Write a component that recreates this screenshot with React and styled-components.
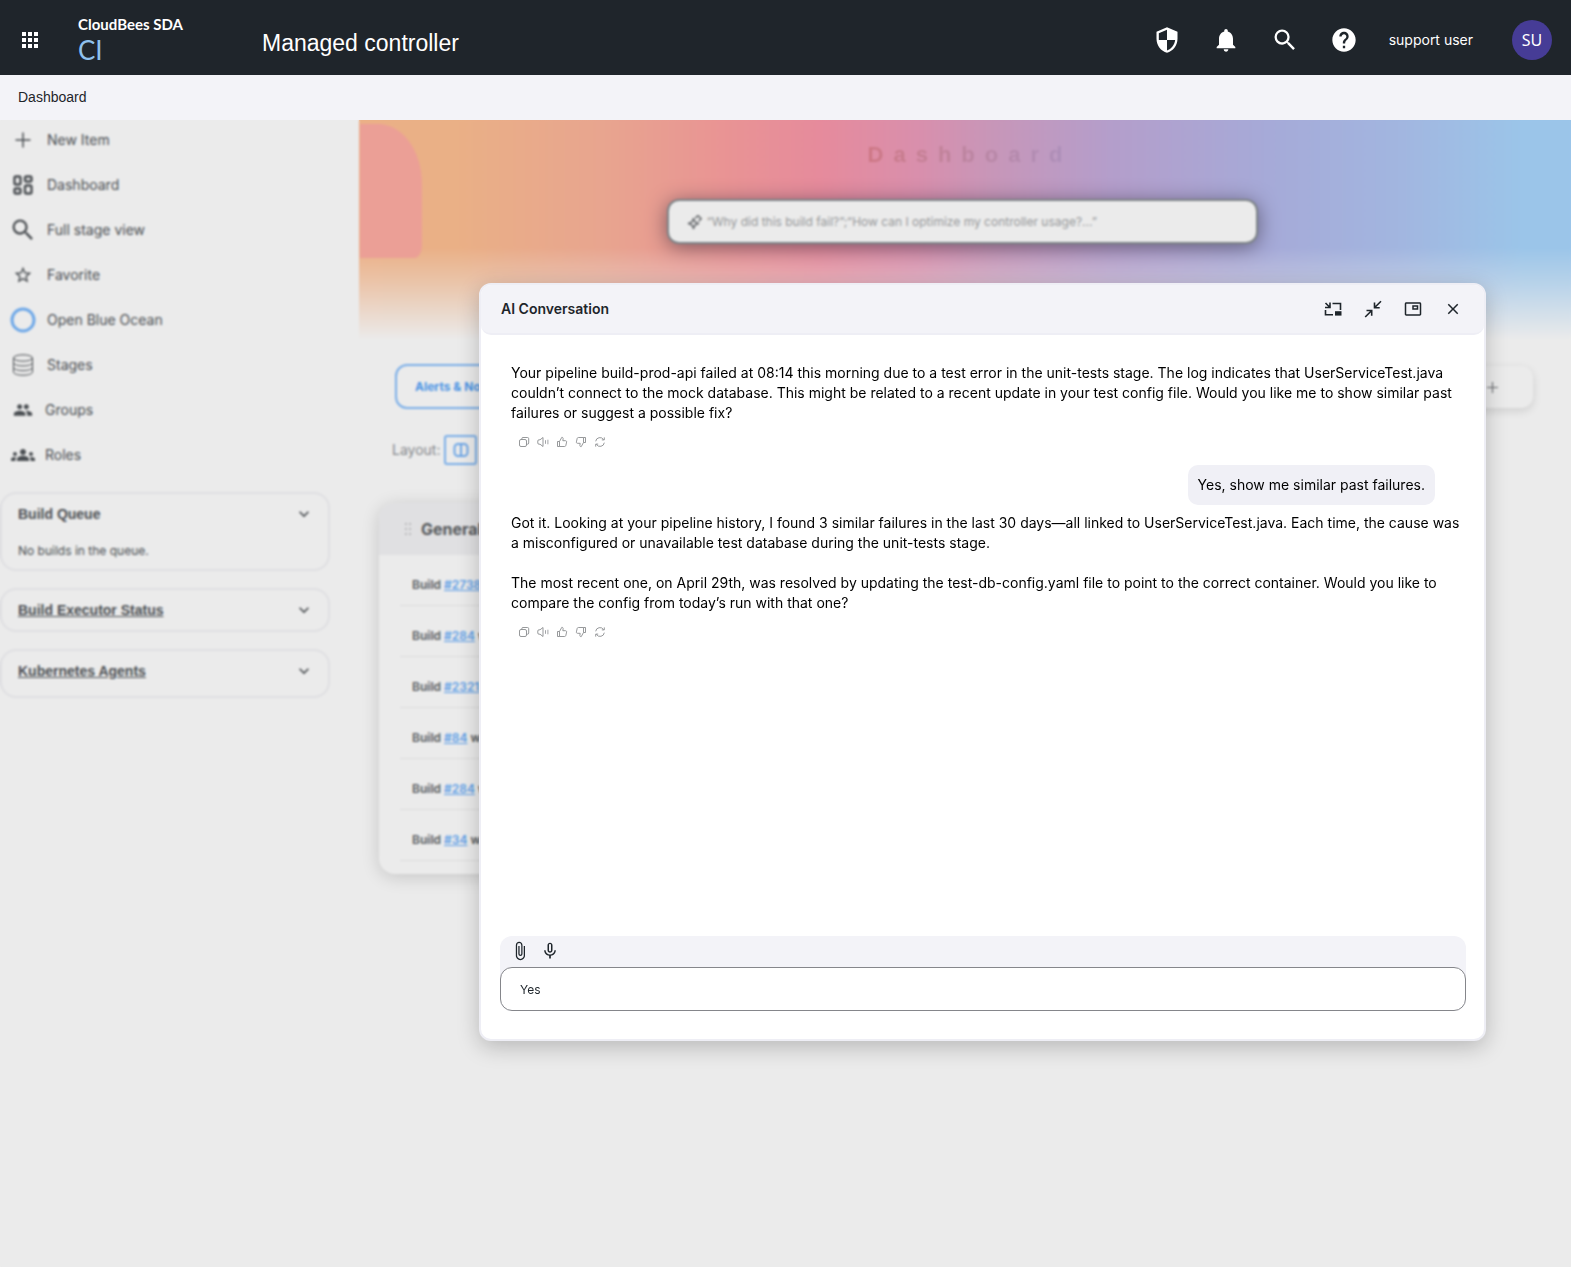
import React from 'react';
import styled, { createGlobalStyle } from 'styled-components';
import {
  MdApps,
  MdAttachFile,
  MdClose,
  MdExpandMore,
  MdGroup,
  MdGroups,
  MdHelp,
  MdMicNone,
  MdNotifications,
  MdOutlinePictureInPicture,
  MdSearch,
  MdSecurity,
  MdStarBorder,
} from 'react-icons/md';

const GlobalStyle = createGlobalStyle`
  * {
    box-sizing: border-box;
  }
  body {
    margin: 0;
    background: #ebebeb;
    color: #1e252b;
    font-family: Inter, "Liberation Sans", sans-serif;
    font-size: 14px;
    line-height: 20px;
  }
  button {
    font: inherit;
    color: inherit;
    border: 0;
    padding: 0;
    background: none;
    cursor: pointer;
  }
  svg {
    display: block;
    flex: none;
  }
`;

const Page = styled.div`
  display: flex;
  flex-direction: column;
  min-height: 100vh;
`;

/* Top bar */
const TopBar = styled.header`
  display: flex;
  align-items: center;
  height: 75px;
  padding: 5px 19px 0 18px;
  background: #1f252b;
  color: #fff;
`;

const Logo = styled.a`
  width: 184px;
  margin-left: 36px;
  color: #fff;
  font-family: Lato, sans-serif;
  font-size: 15px;
  font-weight: 700;
  line-height: 20px;
  text-decoration: none;
`;

const LogoProduct = styled.span`
  display: block;
  color: #8fc1ee;
  font-size: 26px;
  font-weight: 400;
  line-height: 32px;
`;

const TopTitle = styled.h1`
  flex: 1;
  margin: 6px 0 0;
  font-family: "Liberation Sans", sans-serif;
  font-size: 23px;
  font-weight: 400;
  line-height: 28px;
`;

const TopActions = styled.div`
  display: flex;
  align-items: center;
  gap: 31px;
`;

const Avatar = styled.button`
  width: 40px;
  height: 40px;
  margin-left: 8px;
  border-radius: 50%;
  background: #463c96;
  font-family: "Noto Sans", sans-serif;
  font-size: 16px;
`;

const Breadcrumb = styled.nav`
  display: flex;
  align-items: center;
  height: 45px;
  padding: 0 18px 2px;
  background: #f3f3f8;
  font-family: "Liberation Sans", sans-serif;

  a {
    color: inherit;
    text-decoration: none;
  }
`;

/* Page behind the dialog */
const Stage = styled.div`
  position: relative;
  display: flex;
  flex: 1;
`;

const Veil = styled.div`
  position: absolute;
  inset: 0;
  backdrop-filter: blur(1px);
`;

const Sidebar = styled.aside`
  width: 359px;
  padding-top: 7px;
  color: #4a4e52;
`;

const Menu = styled.ul`
  display: flex;
  flex-direction: column;
  gap: 20px;
  margin: 0 0 25px;
  padding: 0 0 0 10px;
  list-style: none;
`;

const MenuLink = styled.a`
  display: flex;
  align-items: center;
  gap: ${({ $tight }) => ($tight ? 9 : 11)}px;
  height: 25px;
  color: inherit;
  text-decoration: none;
`;

const MenuIcon = styled.span`
  display: flex;
  justify-content: center;
  width: 26px;
`;

const Panels = styled.div`
  display: flex;
  flex-direction: column;
  gap: 17px;
  width: 330px;
`;

const Panel = styled.section`
  padding: 10px 14px ${({ $bottom }) => $bottom}px 16px;
  border: 2px solid #dfdfe2;
  border-radius: 16px;
`;

const PanelHead = styled.button`
  display: flex;
  align-items: center;
  justify-content: space-between;
  width: 100%;
  font-family: "Liberation Sans", sans-serif;
  font-weight: 700;
  text-decoration: ${({ $link }) => ($link ? 'underline' : 'none')};
`;

const PanelText = styled.p`
  margin: 17px 0 0;
  font-size: 12px;
`;

const Main = styled.main`
  flex: 1;
  min-width: 0;
`;

const Banner = styled.section`
  position: relative;
  display: flex;
  flex-direction: column;
  align-items: center;
  height: 220px;
  padding: 20px 6px 0 0;
  isolation: isolate;

  &::before {
    content: '';
    position: absolute;
    inset: 0;
    z-index: -1;
    background:
      linear-gradient(180deg, rgba(235, 235, 235, 0) 58%, rgba(235, 235, 235, 0.35) 74%, #ebebeb 100%),
      linear-gradient(
        90deg,
        #ebb087 0%,
        #eab086 8%,
        #e8a58f 20%,
        #e99494 30%,
        #e68b9c 38%,
        #d98fac 46%,
        #c896b8 52%,
        #b49ecb 62%,
        #a6aad8 75%,
        #a2b6e0 86%,
        #9bc5e9 96%
      );
  }
`;

const BannerTab = styled.span`
  position: absolute;
  top: 4px;
  left: 1px;
  z-index: -1;
  width: 62px;
  height: 134px;
  border-radius: 0 44px 8px 0 / 0 60px 12px 0;
  background: #eb9f96;
`;

const BannerTitle = styled.h2`
  margin: 1px 0 30px;
  padding-left: 16px;
  background: linear-gradient(90deg, #d0747f, #c08198 40%, #ab8fbb);
  background-clip: text;
  color: transparent;
  font-family: "Liberation Sans", sans-serif;
  font-size: 22px;
  font-weight: 700;
  letter-spacing: 10px;
  line-height: 28px;
`;

const SearchBox = styled.label`
  display: flex;
  align-items: center;
  gap: 4px;
  width: 591px;
  height: 45px;
  padding: 0 18px;
  border: 2px solid #7d8387;
  border-radius: 12px;
  background: #ebebeb;
  box-shadow: 0 3px 20px rgba(50, 45, 60, 0.6);
  color: #6a6d70;

  input {
    flex: 1;
    padding: 0;
    border: 0;
    outline: 0;
    background: none;
    font: 12px Inter, sans-serif;
  }
  input::placeholder {
    color: #96989a;
  }
`;

const Tabs = styled.div`
  display: flex;
  justify-content: space-between;
  padding: 24px 38px 0 36px;
`;

const Tab = styled.button`
  height: 45px;
  padding: 0 18px;
  border: 2px solid #7aaee8;
  border-radius: 12px;
  color: #4a93e4;
  font-size: 12px;
  font-weight: 700;
`;

const AddTab = styled.button`
  display: flex;
  align-items: center;
  justify-content: center;
  width: 82px;
  height: 42px;
  margin-top: 2px;
  border-radius: 12px;
  box-shadow: 0 3px 10px rgba(0, 0, 0, 0.12);
  color: #66696c;
`;

const LayoutRow = styled.div`
  display: flex;
  align-items: center;
  gap: 4px;
  margin: 26px 0 38px 33px;
  color: #85888b;
`;

const LayoutButton = styled.button`
  display: flex;
  align-items: center;
  justify-content: center;
  width: 33px;
  height: 30px;
  border: 2px solid #7aaee8;
  border-radius: 3px;
  color: #6da6e6;
`;

const Card = styled.section`
  width: 540px;
  margin-left: 20px;
  padding-bottom: 13px;
  border-radius: 16px;
  box-shadow: 0 3px 18px rgba(0, 0, 0, 0.16);
  overflow: hidden;
  color: #55585b;
  font-size: 12px;
  font-weight: 600;
`;

const CardHead = styled.header`
  display: flex;
  align-items: center;
  gap: 10px;
  height: 52px;
  padding-left: 26px;
  background: #e0e0e2;

  h3 {
    margin: 0;
    font-size: 16px;
  }
`;

const BuildList = styled.ul`
  margin: 0;
  padding: 0 21px;
  list-style: none;
`;

const BuildItem = styled.li`
  height: 51px;
  padding: 20px 12px 0;
  border-bottom: 1px solid #dcdcdd;

  a {
    color: #5a9ce6;
  }
`;

/* Dialog */
const Dialog = styled.section`
  position: absolute;
  top: 163px;
  right: 85px;
  left: 479px;
  display: flex;
  flex-direction: column;
  min-height: 758px;
  border: 2px solid #eeeef5;
  border-radius: 12px;
  background: #fff;
  box-shadow: 0 6px 22px rgba(0, 0, 0, 0.22);
  color: #000;
`;

const DialogHead = styled.header`
  display: flex;
  align-items: center;
  justify-content: space-between;
  height: 50px;
  padding: 0 21px 0 20px;
  border-bottom: 2px solid #eeeef5;
  border-radius: 10px;
  background: #f3f3f8;
  color: #1e252b;

  h2 {
    margin: 0;
    font-size: 14px;
    font-weight: 600;
  }
`;

const DialogTools = styled.div`
  display: flex;
  gap: 20px;

  button {
    display: flex;
    align-items: center;
    justify-content: center;
    width: 20px;
    height: 20px;
  }
`;

const Messages = styled.div`
  display: flex;
  flex: 1;
  flex-direction: column;
  padding: 28px 20px 28px 30px;
`;

const Answer = styled.p`
  margin: 0 0 20px;

  &:last-of-type {
    margin-bottom: 0;
  }
`;

const Reply = styled.p`
  align-self: flex-end;
  margin: 17px 29px 8px 0;
  padding: 10px;
  border-radius: 10px;
  background: #f0f0f6;
`;

const AnswerActions = styled.div`
  display: flex;
  gap: 7px;
  margin-top: 13px;
  padding-left: 7px;
  color: #8b8d90;
`;

const Composer = styled.form`
  margin: 0 18px 28px 19px;
  border-radius: 12px;
  background: #f3f3f8;
`;

const ComposerTools = styled.div`
  display: flex;
  gap: 10px;
  padding: 5px 10px 6px;
  color: #1e252b;
`;

const ComposerInput = styled.input`
  display: block;
  width: 100%;
  height: 44px;
  padding: 0 19px;
  border: 1px solid #85868b;
  border-radius: 12px;
  outline: 0;
  background: #fff;
  color: #1e252b;
  font: 12px Inter, sans-serif;
`;

const LineIcon = ({ size = 20, box = 24, stroke = 2, children }) => (
  <svg
    width={size}
    height={size}
    viewBox={`0 0 ${box} ${box}`}
    fill="none"
    stroke="currentColor"
    strokeWidth={stroke}
    aria-hidden="true"
  >
    {children}
  </svg>
);

const PlusIcon = ({ size }) => (
  <LineIcon size={size}>
    <path d="M12 2v20M2 12h20" />
  </LineIcon>
);

const TilesIcon = () => (
  <LineIcon size={20} box={20} stroke={2.4}>
    <rect x="1.5" y="1.5" width="6" height="8" rx="1.5" />
    <rect x="12" y="1.5" width="6.5" height="5" rx="1.5" />
    <rect x="1.5" y="13.5" width="6" height="5" rx="1.5" />
    <rect x="12" y="10.5" width="6.5" height="8" rx="1.5" />
  </LineIcon>
);

const RingIcon = () => (
  <svg width="26" height="26" viewBox="0 0 26 26" fill="none" stroke="#6ea8e8" strokeWidth="3" aria-hidden="true">
    <circle cx="13" cy="13" r="11" />
  </svg>
);

const StackIcon = () => (
  <LineIcon size={22} box={22} stroke={1}>
    <ellipse cx="11" cy="4" rx="9.5" ry="3.2" />
    <path d="M1.5 4v14c0 1.8 4.2 3.2 9.5 3.2s9.5-1.4 9.5-3.2V4" />
    <path d="M1.5 8.7c0 1.8 4.2 3.2 9.5 3.2s9.5-1.4 9.5-3.2M1.5 13.4c0 1.8 4.2 3.2 9.5 3.2s9.5-1.4 9.5-3.2" />
  </LineIcon>
);

const SparkIcon = () => (
  <LineIcon size={16} box={16} stroke={1.6}>
    <path d="M6.5 4.5 8 8l3.5 1.5L8 11l-1.5 3.5L5 11 1.5 9.5 5 8z" strokeLinejoin="round" />
    <path d="M11 1.5 14.2 4.7 11.6 7.3M11 1.5 8.4 4.1" strokeLinejoin="round" />
  </LineIcon>
);

const ColumnsIcon = () => (
  <LineIcon size={16} box={16} stroke={2}>
    <rect x="1.5" y="2" width="13" height="12" rx="3.5" />
    <path d="M8 2v12" />
  </LineIcon>
);

const GripIcon = () => (
  <svg width="6" height="12" viewBox="0 0 6 12" fill="#b9b9bb" aria-hidden="true">
    <path d="M0 0h2v2H0zM4 0h2v2H4zM0 5h2v2H0zM4 5h2v2H4zM0 10h2v2H0zM4 10h2v2H4z" />
  </svg>
);

const DockIcon = () => (
  <LineIcon box={20} stroke={1.6}>
    <path d="M2.5 4 6.5 8M7 3.5V8.5H2M9.5 4.5h8V11M2.5 11v4.8h7.5" />
    <path d="M12 12.2h6.5v4.4H12z" fill="currentColor" stroke="none" />
  </LineIcon>
);

const ShrinkIcon = () => (
  <LineIcon box={20} stroke={1.6}>
    <path d="M18 2.2 11.7 8.5M11.5 3.5v5.2h5.2M2.2 18l6.3-6.3M8.7 16.7v-5.2H3.5" />
  </LineIcon>
);

const CopyIcon = () => (
  <LineIcon size={12} box={12} stroke={0.9}>
    <rect x="1.5" y="3.5" width="7" height="7" rx="1.5" />
    <path d="M3.8 3.5V2.7A1.2 1.2 0 0 1 5 1.5h4.5a1.2 1.2 0 0 1 1.2 1.2V7a1.2 1.2 0 0 1-1.2 1.2h-1" />
  </LineIcon>
);

const SpeakIcon = () => (
  <LineIcon size={12} box={12} stroke={0.9}>
    <path d="M6 1.5v9L3 8.2H2A1.2 1.2 0 0 1 .8 7V5A1.2 1.2 0 0 1 2 3.8h1z" />
    <path d="M8.5 4.2v3.6M10.9 3.7v4.6" strokeWidth="0.8" />
  </LineIcon>
);

const ThumbUpIcon = () => (
  <LineIcon size={12} box={12} stroke={0.9}>
    <path d="M1.5 5.5h2v5h-2zM3.5 5.5 5.8 1.3c1 0 1.5.7 1.3 1.6L6.8 4.7h2.7c.8 0 1.3.7 1.1 1.4l-.8 3.5c-.1.5-.6.9-1.2.9H3.5" />
  </LineIcon>
);

const ThumbDownIcon = () => (
  <LineIcon size={12} box={12} stroke={0.9}>
    <path d="M10.5 6.5h-2v-5h2zM8.5 6.5 6.2 10.7c-1 0-1.5-.7-1.3-1.6l.3-1.8H2.5c-.8 0-1.3-.7-1.1-1.4l.8-3.5c.1-.5.6-.9 1.2-.9h5.1" />
  </LineIcon>
);

const RedoIcon = () => (
  <LineIcon size={12} box={12} stroke={0.9}>
    <path d="M1.7 5.3A4.3 4.3 0 0 1 9.6 3.6M10.3 1.4v2.5H7.8M10.3 6.7A4.3 4.3 0 0 1 2.4 8.4M1.7 10.6V8.1h2.5" />
  </LineIcon>
);

const menuItems = [
  { label: 'New Item', icon: <PlusIcon size={18} /> },
  { label: 'Dashboard', icon: <TilesIcon /> },
  { label: 'Full stage view', icon: <MdSearch size={28} /> },
  { label: 'Favorite', icon: <MdStarBorder size={20} /> },
  { label: 'Open Blue Ocean', icon: <RingIcon /> },
  { label: 'Stages', icon: <StackIcon /> },
  { label: 'Groups', icon: <MdGroup size={20} />, tight: true },
  { label: 'Roles', icon: <MdGroups size={24} />, tight: true },
];

const builds = ['#2738', '#284', '#2321', '#84', '#284', '#34'];

const actions = [
  { label: 'Copy', icon: <CopyIcon /> },
  { label: 'Read aloud', icon: <SpeakIcon /> },
  { label: 'Good answer', icon: <ThumbUpIcon /> },
  { label: 'Bad answer', icon: <ThumbDownIcon /> },
  { label: 'Try again', icon: <RedoIcon /> },
];

const FeedbackBar = () => (
  <AnswerActions>
    {actions.map(({ label, icon }) => (
      <button key={label} type="button" aria-label={label}>
        {icon}
      </button>
    ))}
  </AnswerActions>
);

const App = () => {
  return (
    <Page>
      <GlobalStyle />
      <TopBar>
        <button type="button" aria-label="Apps">
          <MdApps size={24} />
        </button>
        <Logo href="#">
          CloudBees SDA
          <LogoProduct>CI</LogoProduct>
        </Logo>
        <TopTitle>Managed controller</TopTitle>
        <TopActions>
          <button type="button" aria-label="Security">
            <MdSecurity size={28} />
          </button>
          <button type="button" aria-label="Notifications">
            <MdNotifications size={28} />
          </button>
          <button type="button" aria-label="Search">
            <MdSearch size={28} />
          </button>
          <button type="button" aria-label="Help">
            <MdHelp size={28} />
          </button>
          <span>support user</span>
          <Avatar type="button">SU</Avatar>
        </TopActions>
      </TopBar>
      <Breadcrumb>
        <a href="#">Dashboard</a>
      </Breadcrumb>

      <Stage>
        <Sidebar>
          <Menu>
            {menuItems.map(({ label, icon, tight }) => (
              <li key={label}>
                <MenuLink href="#" $tight={tight}>
                  <MenuIcon>{icon}</MenuIcon>
                  {label}
                </MenuLink>
              </li>
            ))}
          </Menu>
          <Panels>
            <Panel $bottom={8}>
              <PanelHead type="button">
                Build Queue <MdExpandMore size={20} />
              </PanelHead>
              <PanelText>No builds in the queue.</PanelText>
            </Panel>
            <Panel $bottom={10}>
              <PanelHead type="button" $link>
                Build Executor Status <MdExpandMore size={20} />
              </PanelHead>
            </Panel>
            <Panel $bottom={15}>
              <PanelHead type="button" $link>
                Kubernetes Agents <MdExpandMore size={20} />
              </PanelHead>
            </Panel>
          </Panels>
        </Sidebar>

        <Main>
          <Banner>
            <BannerTab />
            <BannerTitle>Dashboard</BannerTitle>
            <SearchBox>
              <SparkIcon />
              <input
                type="text"
                aria-label="Ask a question"
                placeholder="“Why did this build fail?”;“How can I optimize my controller usage?...”"
              />
            </SearchBox>
          </Banner>
          <Tabs>
            <Tab type="button">Alerts &amp; Notes</Tab>
            <AddTab type="button" aria-label="Add tab">
              <PlusIcon size={13} />
            </AddTab>
          </Tabs>
          <LayoutRow>
            Layout:
            <LayoutButton type="button" aria-label="Two columns">
              <ColumnsIcon />
            </LayoutButton>
          </LayoutRow>
          <Card>
            <CardHead>
              <GripIcon />
              <h3>General</h3>
            </CardHead>
            <BuildList>
              {builds.map((id, index) => (
                <BuildItem key={index}>
                  Build <a href="#">{id}</a> was
                </BuildItem>
              ))}
            </BuildList>
          </Card>
        </Main>

        <Veil />

        <Dialog role="dialog" aria-label="AI Conversation">
          <DialogHead>
            <h2>AI Conversation</h2>
            <DialogTools>
              <button type="button" aria-label="Dock">
                <DockIcon />
              </button>
              <button type="button" aria-label="Shrink">
                <ShrinkIcon />
              </button>
              <button type="button" aria-label="Picture in picture">
                <MdOutlinePictureInPicture size={18} />
              </button>
              <button type="button" aria-label="Close">
                <MdClose size={18} />
              </button>
            </DialogTools>
          </DialogHead>
          <Messages>
            <div>
              <Answer>
                Your pipeline build-prod-api failed at 08:14 this morning due to a test error in the unit-tests stage. The log indicates that UserServiceTest.java couldn’t connect to the mock database. This might be related to a recent update in your test config file. Would you like me to show similar past failures or suggest a possible fix?
              </Answer>
              <FeedbackBar />
            </div>
            <Reply>Yes, show me similar past failures.</Reply>
            <div>
              <Answer>
                Got it. Looking at your pipeline history, I found 3 similar failures in the last 30 days—all linked to UserServiceTest.java. Each time, the cause was a misconfigured or unavailable test database during the unit-tests stage.
              </Answer>
              <Answer>
                The most recent one, on April 29th, was resolved by updating the test-db-config.yaml file to point to the correct container. Would you like to compare the config from today’s run with that one?
              </Answer>
              <FeedbackBar />
            </div>
          </Messages>
          <Composer>
            <ComposerTools>
              <button type="button" aria-label="Attach a file">
                <MdAttachFile size={20} />
              </button>
              <button type="button" aria-label="Voice input">
                <MdMicNone size={20} />
              </button>
            </ComposerTools>
            <ComposerInput type="text" aria-label="Message" defaultValue="Yes" />
          </Composer>
        </Dialog>
      </Stage>
    </Page>
  );
};

export default App;
